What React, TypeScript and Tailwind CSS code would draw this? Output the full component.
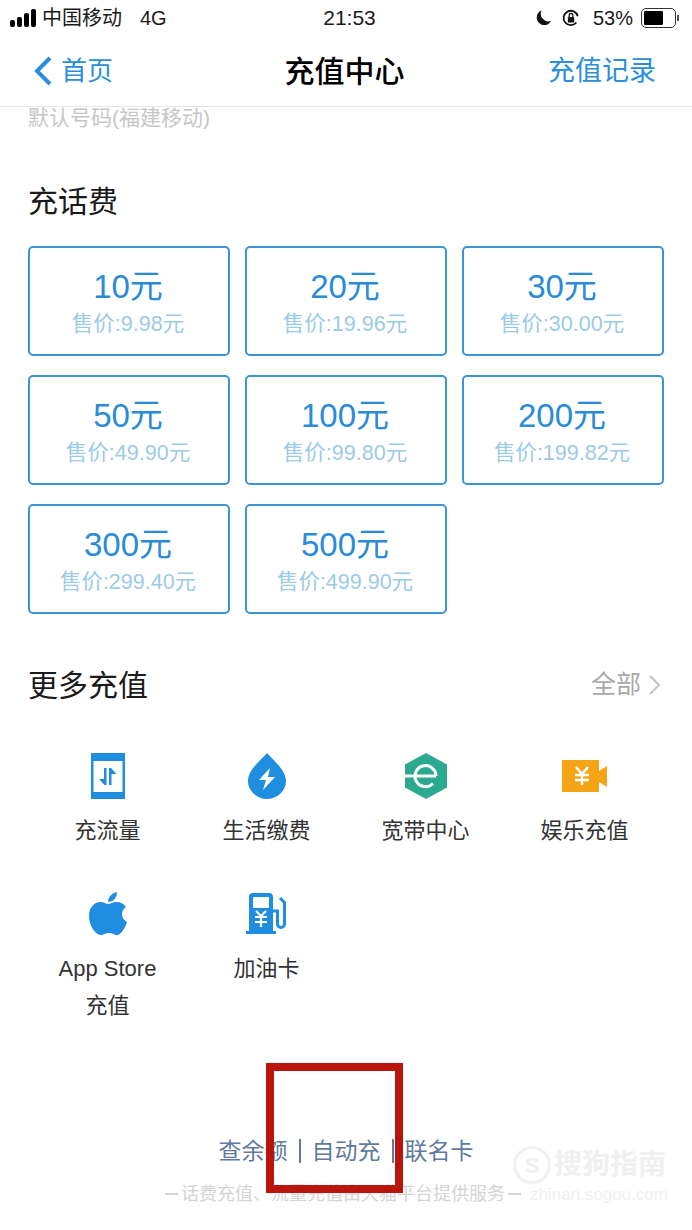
const CJK = "font-['Liberation_Sans','Noto_Sans_CJK_SC',sans-serif]";

const amounts = [
  { name: '10元', price: '售价:9.98元' },
  { name: '20元', price: '售价:19.96元' },
  { name: '30元', price: '售价:30.00元' },
  { name: '50元', price: '售价:49.90元' },
  { name: '100元', price: '售价:99.80元' },
  { name: '200元', price: '售价:199.82元' },
  { name: '300元', price: '售价:299.40元' },
  { name: '500元', price: '售价:499.90元' },
];

const DataIcon = () => (
  <svg width="34" height="46" viewBox="0 0 34 46">
    <rect x="0" y="0" width="34" height="46" fill="#1f8ee0" />
    <rect x="2.500" y="8" width="29" height="31" fill="#fff" />
    <path d="M15.500 15v17h-2l-5.500-6h5V15zM18 32V15h2l5.500 6h-5v11z" fill="#1f8ee0" />
  </svg>
);

const DropIcon = () => (
  <svg width="38" height="46" viewBox="0 0 38 46">
    <path d="M19 0C13 7 0 17 0 28c0 10 9 18 19 18s19-8 19-18C38 17 25 7 19 0z" fill="#1f8ee0" />
    <path d="M22 15L11 27h7l-3 10 12-13h-7z" fill="#fff" />
  </svg>
);

const BroadbandIcon = () => (
  <svg width="42" height="46" viewBox="0 0 42 46">
    <path d="M21 0l21 11.500v23L21 46 0 34.500v-23z" fill="#2baa8f" />
    <path d="M0 23h31" stroke="#fff" strokeWidth="3" />
    <path d="M31 23a10.500 10.500 0 1 0-3 7.500" fill="none" stroke="#fff" strokeWidth="3" />
  </svg>
);

const VideoIcon = () => (
  <svg width="45" height="32" viewBox="0 0 45 32">
    <path d="M0 0h37v32H0zM37 11l8-5v21l-8-5z" fill="#f5a416" />
    <path d="M14 7l6 7 6-7M13 15h14M13 20h14M20 14v11" fill="none" stroke="#fff" strokeWidth="2.500" />
  </svg>
);

const AppleIcon = () => (
  <svg width="38" height="44" viewBox="0 0 38 44">
    <path d="M19 12c2 0 5-2 9-2 4 0 7 2 9 5-5 3-6 11 1 15-2 6-6 13-10 13-3 0-4-2-8-2s-5 2-8 2C6 43 0 33 0 24c0-9 6-14 11-14 4 0 6 2 8 2z" fill="#1f8ee0" />
    <path d="M19 10c0-5 4-9 9-10 0 6-4 10-9 10z" fill="#1f8ee0" />
  </svg>
);

const FuelIcon = () => (
  <svg width="41" height="42" viewBox="0 0 41 42">
    <path d="M3 4a4 4 0 0 1 4-4h16a4 4 0 0 1 4 4v34h3v3H0v-3h3z" fill="#1f8ee0" />
    <rect x="7" y="4" width="16" height="11" rx="1" fill="#fff" />
    <path d="M10 18l5 5 5-5M9 24h12M9 29h12M15 23v11" fill="none" stroke="#fff" strokeWidth="2.200" />
    <path d="M34 5l4.500 4.500v21.500a3.500 3.500 0 0 1-7 0V18H27" fill="none" stroke="#1f8ee0" strokeWidth="3" />
  </svg>
);

const shortcuts = [
  { label: '充流量', icon: <DataIcon /> },
  { label: '生活缴费', icon: <DropIcon /> },
  { label: '宽带中心', icon: <BroadbandIcon /> },
  { label: '娱乐充值', icon: <VideoIcon /> },
  { label: 'App Store 充值', icon: <AppleIcon /> },
  { label: '加油卡', icon: <FuelIcon /> },
];

export default function App() {
  return (
    <div className={`relative w-[692px] h-[1230px] overflow-hidden bg-white ${CJK}`}>
      {/* Status bar */}
      <div className="flex items-center justify-between h-[36px] pl-[10px] pr-[13px] text-[#1a1a1a]">
        <div className="flex items-center w-[240px]">
          <div className="flex items-end gap-[2px] mr-[6px]">
            <span className="w-[5px] h-[7px] bg-black rounded-[2px]" />
            <span className="w-[5px] h-[10px] bg-black rounded-[2px]" />
            <span className="w-[5px] h-[14px] bg-black rounded-[2px]" />
            <span className="w-[5px] h-[18px] bg-black rounded-[2px]" />
          </div>
          <span className="text-[20px]">中国移动</span>
          <span className="text-[20px] ml-[18px]">4G</span>
        </div>
        <span className="text-[21px] font-medium ml-[10px]">21:53</span>
        <div className="flex items-center justify-end w-[240px]">
          <svg width="17" height="18" viewBox="0 0 18 18" className="mr-[10px]">
            <path d="M7 1a8 8 0 1 0 10 11A8 8 0 0 1 7 1z" fill="#111" />
          </svg>
          <svg width="18" height="18" viewBox="0 0 20 20" className="mr-[13px]">
            <path d="M16 15A8 8 0 1 1 17.500 8" fill="none" stroke="#111" strokeWidth="2" />
            <rect x="6.500" y="9" width="7" height="6" fill="#111" />
            <path d="M8 9V7a2 2 0 0 1 4 0v2" fill="none" stroke="#111" strokeWidth="1.500" />
          </svg>
          <span className="text-[20px]">53%</span>
          <div className="ml-[8px] w-[35px] h-[20px] rounded-[5px] border border-[#333] p-[2px]">
            <div className="h-full w-[19px] bg-black rounded-[1px]" />
          </div>
          <span className="ml-[1px] w-[2px] h-[6px] bg-[#555]" />
        </div>
      </div>

      {/* Nav */}
      <div className="flex items-center justify-between h-[71px] pl-[33px] pr-[36px] border-b border-[#e8e8e8]">
        <div className="flex items-center w-[160px] text-[#2a8fd8]">
          <svg width="20" height="30" viewBox="0 0 20 30" className="mr-[8px]">
            <path d="M17 2L4 15l13 13" fill="none" stroke="#2a8fd8" strokeWidth="4" />
          </svg>
          <span className="text-[26px]">首页</span>
        </div>
        <span className="text-[30px] font-medium text-black">充值中心</span>
        <span className="w-[160px] text-right text-[27px] text-[#2a8fd8]">充值记录</span>
      </div>

      <div className="px-[28px]">
        <div className="h-[80px]">
          <div className="text-[21px] leading-[22px] text-[#c6c6c6]">默认号码(福建移动)</div>
        </div>
        <h2 className="text-[30px] leading-[30px] text-[#1a1a1a] mb-[29px]">充话费</h2>

        {/* Amount cards */}
        <div className="grid grid-cols-3 gap-x-[15px] gap-y-[19px] w-[636px]">
          {amounts.map((item) => (
            <div
              key={item.name}
              className="h-[110px] rounded-[5px] border-2 border-[#3b94d4] flex flex-col items-center pt-[20px]"
            >
              <span className="text-[33px] leading-[38px] text-[#2a8bd6] -ml-[2px]">{item.name}</span>
              <span className="text-[21.500px] leading-[28px] mt-[4px] text-[#9ccbe6] -ml-[2px]">{item.price}</span>
            </div>
          ))}
        </div>

        {/* More */}
        <div className="flex items-center justify-between mt-[53px] h-[36px] w-[636px]">
          <h2 className="text-[30px] text-[#1a1a1a]">更多充值</h2>
          <div className="flex items-center text-[#a9a9a9] pr-[2px]">
            <span className="text-[25px]">全部</span>
            <svg width="14" height="22" viewBox="0 0 14 22" className="ml-[7px]">
              <path d="M2 2l9 9-9 9" fill="none" stroke="#c2c2c2" strokeWidth="2" />
            </svg>
          </div>
        </div>

        <div className="grid grid-cols-4 w-[636px] mt-[50px]">
          {shortcuts.map((item, idx) => (
            <div key={item.label} className={`flex flex-col items-center ${idx < 4 ? 'h-[138px]' : ''}`}>
              <div className="h-[46px] flex items-center justify-center">{item.icon}</div>
              <div className="mt-[13px] w-[110px] text-center text-[22px] leading-[37px] text-[#333]">
                {item.label}
              </div>
            </div>
          ))}
        </div>
      </div>

      {/* Footer links */}
      <div className="absolute left-0 right-0 top-[1134px] flex justify-center items-center text-[23px] leading-[34px] text-[#5f7a9c]">
        <div className="flex items-center">
          <span>查余额</span>
          <span className="w-[2px] h-[24px] bg-[#5f7a9c] mx-[11px]" />
          <span>自动充</span>
          <span className="w-[2px] h-[24px] bg-[#5f7a9c] mx-[11px]" />
          <span>联名卡</span>
        </div>
      </div>
      <div className="absolute left-[165px] top-[1182px] flex items-center text-[18px] leading-[24px] text-[#d4d4d4] whitespace-nowrap">
        <span className="w-[13px] h-[2px] bg-[#d4d4d4] mr-[3px]" />
        话费充值、流量充值由天猫平台提供服务
        <span className="w-[13px] h-[2px] bg-[#d4d4d4] ml-[3px]" />
      </div>

      {/* Watermark */}
      <div className="absolute left-[513px] top-[1146px] flex items-center text-[#f0f0f0]">
        <div className="w-[38px] h-[38px] rounded-full border-[3px] border-[#f0f0f0] flex items-center justify-center text-[22px] font-bold">
          S
        </div>
        <span className="ml-[3px] text-[28px] font-bold leading-[34px]">搜狗指南</span>
      </div>
      <div className="absolute left-[530px] top-[1185px] text-[17px] leading-[20px] text-[#f0f0f0]">
        zhinan.sogou.com
      </div>

      {/* Red annotation box */}
      <div className="absolute left-[266px] top-[1063px] w-[137px] h-[130px] border-[8px] border-[#b8160c]" />
    </div>
  );
}
